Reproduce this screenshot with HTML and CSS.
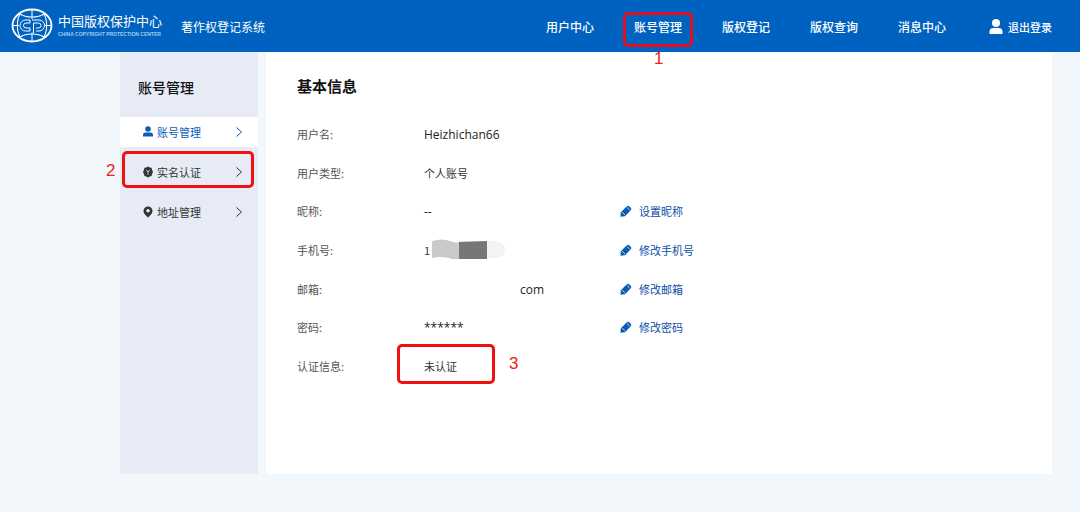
FILE: index.html
```html
<!DOCTYPE html>
<html lang="zh-CN">
<head>
    <meta charset="UTF-8" />
    <meta name="viewport" content="width=device-width, initial-scale=1.0" />
    <title>著作权登记系统</title>
    <link rel="stylesheet" href="styles.css">
</head>
<body>
    <header class="header">
        <a class="brand" href="#">
            <svg class="brand-logo" viewBox="0 0 42 36" fill="none" stroke="currentColor" aria-hidden="true">
                <ellipse cx="21" cy="17.5" rx="19.5" ry="16" stroke-width="1.8" />
                <path d="M21 2v9M21 24.500v9M2 17.500h6M34 17.500h6" stroke-width="1" />
                <path d="M9 6c6 4 18 4 24 0M9 29c6-4 18-4 24 0" stroke-width="1.2" />
                <path d="M9 6C5.500 12 5.500 23 9 29M33 6C36.500 12 36.500 23 33 29" stroke-width="1.1" />
                <path d="M19 12h-4.500a5.500 5.500 0 0 0 0 11H19M19 15h-4a2.500 2.500 0 0 0 0 5h4" stroke-width="1" />
                <path d="M19 12v3M19 20v3M22.500 25V15h5a2.500 2.500 0 0 1 0 5h-2.500M21 12h7a5.500 5.500 0 0 1 0 11h-3" stroke-width="1" />
            </svg>
            <span class="brand-name">
                <span class="brand-cn">中国版权保护中心</span>
                <span class="brand-en">CHINA COPYRIGHT PROTECTION CENTER</span>
            </span>
        </a>
        <span class="system-name">著作权登记系统</span>
        <nav class="nav">
            <a href="#">用户中心</a>
            <a href="#" class="marked">账号管理<span class="mark mark-nav"><span class="mark-number">1</span></span></a>
            <a href="#">版权登记</a>
            <a href="#">版权查询</a>
            <a href="#">消息中心</a>
        </nav>
        <button type="button" class="logout">
            <svg class="logout-icon" viewBox="0 0 14 16" fill="currentColor" aria-hidden="true">
                <circle cx="7" cy="4" r="4" />
                <path d="M0.500 15v-2q0-4 4-4h5q4 0 4 4v2z" />
            </svg>
            退出登录
        </button>
    </header>

    <div class="page">
        <aside class="sidebar">
            <h2 class="sidebar-title">账号管理</h2>
            <nav class="menu">
                <a href="#" class="menu-item active">
                    <svg class="menu-icon" viewBox="0 0 10 12" fill="currentColor" aria-hidden="true">
                        <circle cx="5" cy="3" r="2.800" />
                        <path d="M0 10.500V9Q0 6.500 2.500 6.500h5Q10 6.500 10 9v1.500z" />
                    </svg>
                    账号管理
                    <svg class="menu-arrow" viewBox="0 0 6 10" fill="none" stroke="currentColor" aria-hidden="true"><path d="M0.500 0.500L5.500 5l-5 4.500" /></svg>
                </a>
                <a href="#" class="menu-item marked">
                    <svg class="menu-icon" viewBox="0 0 10 12" fill="currentColor" aria-hidden="true">
                        <path d="M5 0.500l1.700 1 1.900.2.300 1.900L10 6 8.900 8.200l-.3 1.900-1.900.3L5 11.500l-1.700-1.100-1.900-.3-.3-1.900L0 6l1.100-2.400.3-1.900 1.900-.2z" />
                        <path d="M3.200 3.800L5 6.200l1.800-2.400M5 6.200V8.800" fill="none" stroke="#e7ebf5" stroke-width="0.800" />
                    </svg>
                    实名认证
                    <svg class="menu-arrow" viewBox="0 0 6 10" fill="none" stroke="currentColor" aria-hidden="true"><path d="M0.500 0.500L5.500 5l-5 4.500" /></svg>
                    <span class="mark mark-menu"><span class="mark-number">2</span></span>
                </a>
                <a href="#" class="menu-item">
                    <svg class="menu-icon" viewBox="0 0 10 12" fill="currentColor" aria-hidden="true">
                        <path fill-rule="evenodd" d="M5 0.500a4.500 4.500 0 0 1 4.500 4.500C9.500 8 6.500 10 5 11.500 3.500 10 .5 8 .5 5A4.500 4.500 0 0 1 5 .5zM5 3a1.800 1.800 0 1 0 0 3.600A1.800 1.800 0 0 0 5 3z" />
                    </svg>
                    地址管理
                    <svg class="menu-arrow" viewBox="0 0 6 10" fill="none" stroke="currentColor" aria-hidden="true"><path d="M0.500 0.500L5.500 5l-5 4.500" /></svg>
                </a>
            </nav>
        </aside>

        <main class="content">
            <h1 class="content-title">基本信息</h1>
            <dl class="info">
                <div class="info-row">
                    <dt>用户名:</dt>
                    <dd class="latin">Heizhichan66</dd>
                </div>
                <div class="info-row">
                    <dt>用户类型:</dt>
                    <dd>个人账号</dd>
                </div>
                <div class="info-row">
                    <dt>昵称:</dt>
                    <dd class="latin">--</dd>
                    <dd><a href="#" class="edit"><svg class="edit-icon" viewBox="0 0 12 12" aria-hidden="true"><use href="#pencil" /></svg>设置昵称</a></dd>
                </div>
                <div class="info-row">
                    <dt>手机号:</dt>
                    <dd class="phone">1
                        <svg class="phone-mask" viewBox="0 0 74 22" aria-hidden="true">
                            <path d="M26 2h38q9 2 9 9t-9 8H26z" fill="#f3f3f3" />
                            <path d="M0 2q10-3 18 0 5 2 9 1.500V20q-6 1-10-1-8-2-17 0z" fill="#c9c9c9" />
                            <path d="M27 3l28-1v18H27z" fill="#777" />
                        </svg>
                    </dd>
                    <dd><a href="#" class="edit"><svg class="edit-icon" viewBox="0 0 12 12" aria-hidden="true"><use href="#pencil" /></svg>修改手机号</a></dd>
                </div>
                <div class="info-row">
                    <dt>邮箱:</dt>
                    <dd class="latin email">com</dd>
                    <dd><a href="#" class="edit"><svg class="edit-icon" viewBox="0 0 12 12" aria-hidden="true"><use href="#pencil" /></svg>修改邮箱</a></dd>
                </div>
                <div class="info-row">
                    <dt>密码:</dt>
                    <dd class="latin">******</dd>
                    <dd><a href="#" class="edit"><svg class="edit-icon" viewBox="0 0 12 12" aria-hidden="true"><use href="#pencil" /></svg>修改密码</a></dd>
                </div>
                <div class="info-row">
                    <dt>认证信息:</dt>
                    <dd class="marked">未认证<span class="mark mark-status"><span class="mark-number">3</span></span></dd>
                </div>
            </dl>
        </main>
    </div>

    <svg width="0" height="0" class="symbols" aria-hidden="true">
        <symbol id="pencil" viewBox="0 0 12 12">
            <path d="M0.500 11.800L0.800 7.200 6.800 1.200q1.200-1 2.300 0l1.700 1.600q1.200 1.200 0 2.400L5 11.200z" fill="#0b5cb8" />
            <path d="M6.800 2.200l3 2.900M2 7l3 3" stroke="#fff" stroke-width="0.700" />
        </symbol>
    </svg>
</body>
</html>
```
FILE: styles.css
```css
* {
    box-sizing: border-box;
}
body {
    margin: 0;
    min-height: 100vh;
    background-color: #f2f7fb;
    color: #333;
    font-family: "Noto Sans CJK SC", sans-serif;
    font-size: 11px;
    line-height: 16px;
}
a {
    color: inherit;
    text-decoration: none;
}

/* header */
.header {
    position: relative;
    z-index: 1;
    display: flex;
    align-items: center;
    height: 52px;
    padding: 2px 28px 0 11px;
    background-color: #0062c0;
    color: #fff;
}
.brand {
    display: flex;
    align-items: center;
    gap: 5px;
    padding-bottom: 2px;
}
.brand-logo {
    width: 42px;
    height: 36px;
}
.brand-name {
    display: flex;
    flex-direction: column;
    width: 110px;
    white-space: nowrap;
}
.brand-cn {
    font-size: 13px;
}
.brand-en {
    color: #a5c8ee;
    font-family: "Liberation Sans", sans-serif;
    font-size: 5px;
    font-weight: bold;
    line-height: 10px;
}
.system-name {
    margin-left: 13px;
    font-size: 12px;
}
.nav {
    display: flex;
    gap: 40px;
    margin-left: auto;
    font-size: 12px;
    font-weight: 500;
}
.logout {
    display: flex;
    align-items: center;
    gap: 5px;
    margin-left: 43px;
    padding: 0;
    border: none;
    background: none;
    color: inherit;
    font: inherit;
    font-weight: 500;
    cursor: pointer;
}
.logout-icon {
    width: 14px;
    height: 16px;
}

/* page */
.page {
    display: flex;
    gap: 8px;
    min-height: 422px;
    padding: 0 28px 0 120px;
}
.sidebar {
    width: 138px;
    background-color: #e7ebf5;
}
.sidebar-title {
    margin: 0;
    padding: 25px 18px 20px;
    color: #111;
    font-size: 14px;
    font-weight: 500;
    line-height: 20px;
}
.menu {
    display: flex;
    flex-direction: column;
    gap: 10px;
}
.menu-item {
    display: flex;
    align-items: center;
    height: 30px;
    padding: 0 16px 0 23px;
}
.menu-item.active {
    background-color: #fff;
    color: #0b5cb8;
}
.menu-icon {
    width: 10px;
    height: 12px;
    margin-right: 4px;
}
.menu-arrow {
    width: 6px;
    height: 10px;
    margin-left: auto;
}
.content {
    flex: 1;
    padding: 24px 31px;
    background-color: #fff;
}
.content-title {
    margin: 0;
    color: #111;
    font-size: 15px;
    font-weight: bold;
    line-height: 20px;
}
.info {
    display: grid;
    grid-auto-rows: 1fr;
    height: 270px;
    margin: 19px 0 0;
}
.info-row {
    display: grid;
    grid-template-columns: 127px 196px 1fr;
    align-items: center;
}
.info-row dt {
    color: #555;
}
.info-row dd {
    margin: 0;
}
.info-row .latin {
    padding-top: 2px;
    color: #222;
    font-family: "Open Sans", sans-serif;
    font-size: 12px;
}
.info-row .email {
    padding-left: 96px;
}
.phone {
    display: flex;
    align-items: center;
    gap: 2px;
}
.phone-mask {
    width: 74px;
    height: 22px;
}
.edit {
    display: flex;
    align-items: center;
    gap: 7px;
    color: #0b4ea8;
}
.edit-icon {
    width: 12px;
    height: 12px;
}
.symbols {
    position: absolute;
}

/* numbered marks */
.marked {
    position: relative;
}
.mark {
    position: absolute;
    border: 3px solid #f01010;
    border-radius: 5px;
    pointer-events: none;
}
.mark-number {
    position: absolute;
    color: #f02020;
    font-family: "Liberation Sans", sans-serif;
    font-size: 17px;
    font-weight: normal;
    line-height: 20px;
}
.mark-nav {
    inset: -7px -11px -12px;
    border-color: #e01020;
}
.mark-nav .mark-number {
    top: 34px;
    left: 28px;
}
.mark-menu {
    inset: -6px 4px -1px 2px;
}
.mark-menu .mark-number {
    top: 7px;
    left: -19px;
}
.mark-status {
    top: -14px;
    left: -27px;
    width: 98px;
    height: 40px;
}
.mark-status .mark-number {
    top: 7px;
    left: 109px;
}
```
